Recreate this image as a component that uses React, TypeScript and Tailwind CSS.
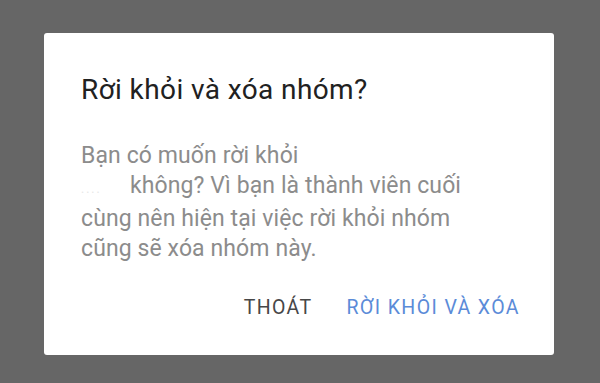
export default function App() {
  return (
    <div className="w-[600px] h-[383px] bg-[#666666] pt-[33px] pl-[44px] font-['Roboto',sans-serif]">
      <div className="w-[510px] h-[322px] bg-white rounded-[3px] flex flex-col pl-[37px] pr-[34px]">
        <h2 className="mt-[40px] text-[28px] leading-[34px] tracking-[0.4px] text-[#212121]">
          Rời khỏi và xóa nhóm?
        </h2>
        <p className="mt-[34px] text-[23px] leading-[30px] tracking-[0.1px] text-[#8c8c8c] whitespace-nowrap">
          Bạn có muốn rời khỏi
          <br />
          <span className="inline-block w-[49px] text-[#e6e6e6] text-[12px] tracking-[2px]">....</span>
          không? Vì bạn là thành viên cuối
          <br />
          cùng nên hiện tại việc rời khỏi nhóm
          <br />
          cũng sẽ xóa nhóm này.
        </p>
        <div className="mt-[32px] flex justify-end items-center gap-[34px] text-[19.5px] leading-[24px] tracking-[1.4px]">
          <button className="text-[#474747]">THOÁT</button>
          <button className="text-[#5b8bd8]">RỜI KHỎI VÀ XÓA</button>
        </div>
      </div>
    </div>
  )
}
